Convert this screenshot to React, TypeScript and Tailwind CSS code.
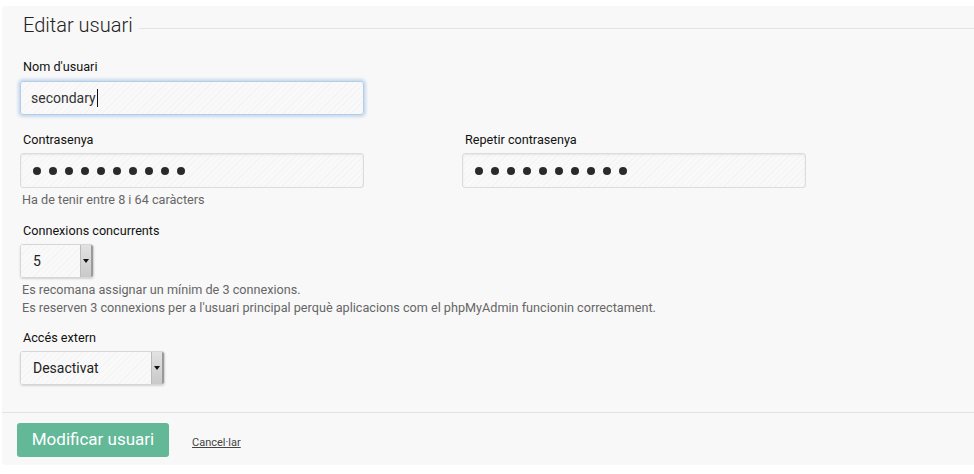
import React from 'react';

const stripes =
  'bg-[repeating-linear-gradient(135deg,#f9f9f9_0px,#f9f9f9_3px,#f4f4f4_3px,#f4f4f4_4px)]';

function Label({ children }: { children: React.ReactNode }) {
  return <div className="pl-[3px] text-[12.65px] leading-[16px] text-[#111]">{children}</div>;
}

function Help({ children }: { children: React.ReactNode }) {
  return <div className="pl-[2px] text-[12.65px] leading-[18px] text-[#666]">{children}</div>;
}

function PasswordField() {
  return (
    <div
      className={`mt-[5px] flex h-[35px] w-[344px] items-center gap-[8px] rounded-[3px] border border-[#dcdcdc] pl-[12px] shadow-[inset_0_1px_2px_rgba(0,0,0,0.08)] ${stripes}`}
    >
      {Array.from({ length: 10 }).map((_, i) => (
        <span key={i} className="h-[8px] w-[8px] rounded-full bg-[#2a2a2a]" />
      ))}
    </div>
  );
}

function Select({ value, width }: { value: string; width: string }) {
  return (
    <div
      className={`mt-[5px] flex h-[34px] ${width} overflow-hidden rounded-[3px] border border-[#d6d6d6] shadow-[0_1px_2px_rgba(0,0,0,0.15)]`}
    >
      <div className={`flex flex-1 items-center pl-[12px] text-[14px] text-[#222] ${stripes}`}>{value}</div>
      <div className="flex w-[13px] items-center justify-center border-l border-[#bbb] border-r-2 border-r-[#9a9a9a] bg-gradient-to-b from-[#e2e2e2] to-[#c9c9c9]">
        <svg width="6" height="4" viewBox="0 0 6 4">
          <path d="M0 0h6L3 4z" fill="#111" />
        </svg>
      </div>
    </div>
  );
}

export default function App() {
  return (
    <div className="h-[474px] w-[974px] bg-white pl-[2px] pt-[6px] font-['Roboto',sans-serif]">
      <div className="flex h-[459px] flex-col rounded-l-[4px] bg-[#f8f8f8] pb-[8px]">
        <div className="flex h-[38px] items-center pl-[21px]">
          <span className="text-[20px] font-light text-[#222]">Editar usuari</span>
          <div className="ml-[6px] mt-[6px] h-px flex-1 bg-[#e3e3e3]" />
        </div>

        <div className="flex flex-col pl-[18px]">
          <div className="mt-[15px]">
            <Label>Nom d'usuari</Label>
          </div>
          <div
            className={`mt-[6px] flex h-[34px] w-[344px] items-center rounded-[3px] border border-[#b4cde6] pl-[10px] text-[14px] text-[#333] shadow-[0_0_3px_2px_rgba(140,180,225,0.45)] ${stripes}`}
          >
            secondary
            <span className="ml-[1px] h-[18px] w-px bg-[#111]" />
          </div>

          <div className="mt-[17px] flex gap-[98px]">
            <div className="flex flex-col">
              <Label>Contrasenya</Label>
              <PasswordField />
              <div className="mt-[3px]">
                <Help>Ha de tenir entre 8 i 64 caràcters</Help>
              </div>
            </div>
            <div className="flex flex-col">
              <Label>Repetir contrasenya</Label>
              <PasswordField />
            </div>
          </div>

          <div className="mt-[14px]">
            <Label>Connexions concurrents</Label>
          </div>
          <Select value="5" width="w-[74px]" />
          <div className="mt-[3px]">
            <Help>Es recomana assignar un mínim de 3 connexions.</Help>
            <Help>
              Es reserven 3 connexions per a l'usuari principal perquè aplicacions com el phpMyAdmin funcionin
              correctament.
            </Help>
          </div>

          <div className="mt-[13px]">
            <Label>Accés extern</Label>
          </div>
          <Select value="Desactivat" width="w-[145px]" />
        </div>

        <div className="mt-[27px] h-px bg-[#e2e2e2]" />

        <div className="mt-[10px] flex items-center pl-[15px]">
          <button className="h-[34px] w-[152px] rounded-[3px] bg-[#62b897] text-[17px] text-white">
            Modificar usuari
          </button>
          <a className="ml-[23px] mt-[6px] text-[11px] text-[#444] underline">Cancel·lar</a>
        </div>
      </div>
    </div>
  );
}
